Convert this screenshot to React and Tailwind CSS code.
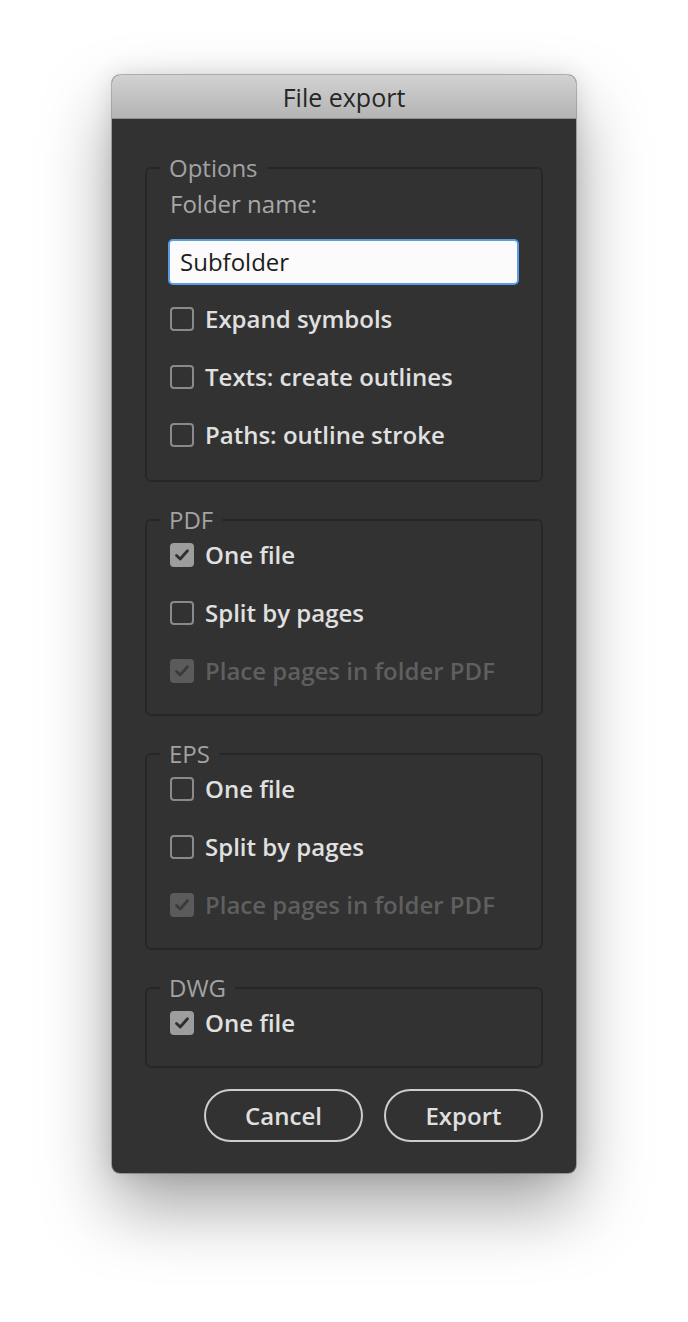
import React from "react";

const font = { fontFamily: '"Open Sans", "Noto Sans", sans-serif' };

function Check({ color }) {
  return (
    <svg width="18" height="18" viewBox="0 0 18 18" fill="none">
      <polyline points="3.5,9.5 7.2,13 14.5,4.8" stroke={color} strokeWidth="2.8" strokeLinecap="round" strokeLinejoin="round" />
    </svg>
  );
}

function Row({ label, checked, disabled }) {
  let box;
  if (checked && disabled) {
    box = (
      <div className="w-[24px] h-[24px] rounded-[4px] bg-[#5b5b5b] flex items-center justify-center shrink-0">
        <Check color="#3b3b3b" />
      </div>
    );
  } else if (checked) {
    box = (
      <div className="w-[24px] h-[24px] rounded-[4px] bg-[#9d9d9d] flex items-center justify-center shrink-0">
        <Check color="#2f2f2f" />
      </div>
    );
  } else {
    box = <div className="w-[24px] h-[24px] rounded-[4px] border-2 border-[#8a8a8a] shrink-0" />;
  }
  return (
    <div className="flex items-center h-[30px] gap-[11px]">
      {box}
      <span className={"text-[24px] leading-[30px] font-semibold whitespace-nowrap " + (disabled ? "text-[#5f5f5f]" : "text-[#e0e0e0]")}>
        {label}
      </span>
    </div>
  );
}

function Group({ title, children }) {
  return (
    <fieldset className="mt-[23px] border-2 border-[#272727] rounded-[6px] pl-[13px] pr-[13px] pb-[28px]">
      <legend className="px-[9px] text-[24px] leading-[30px] text-[#a2a2a2]">{title}</legend>
      <div className="pl-[10px] pt-[5px] flex flex-col gap-[28px]">{children}</div>
    </fieldset>
  );
}

export default function App() {
  return (
    <div className="min-h-[1322px] w-full bg-white flex justify-center pt-[75px]" style={font}>
      <div className="w-[464px] h-[1098px] rounded-[8px] bg-[#323232] flex flex-col overflow-hidden shadow-[0_34px_70px_rgba(0,0,0,0.36),0_0_0_1px_rgba(0,0,0,0.25),0_0_24px_rgba(0,0,0,0.12)]">
        <div className="h-[44px] shrink-0 bg-gradient-to-b from-[#d2d2d2] to-[#b4b4b4] border-b border-[#8f8f8f] flex items-center justify-center">
          <span className="text-[25px] leading-[30px] text-[#262626]">File export</span>
        </div>
        <div className="px-[33px] pt-[34px] flex flex-col">
          <fieldset className="border-2 border-[#272727] rounded-[6px] pl-[13px] pr-[13px] pb-[30px]">
            <legend className="px-[9px] text-[24px] leading-[30px] text-[#a2a2a2]">Options</legend>
            <div className="pl-[10px] pt-[6px] flex flex-col">
              <div className="text-[24px] leading-[30px] text-[#a8a8a8]">Folder name:</div>
              <div className="mt-[20px] -ml-[2px] w-[351px] h-[46px] rounded-[5px] border-2 border-[#5a9be8] bg-[#fbfbfb] flex items-center pl-[10px]">
                <span className="text-[24px] leading-[30px] text-[#1c1c1c]">Subfolder</span>
              </div>
              <div className="mt-[19px] flex flex-col gap-[28px]">
                <Row label="Expand symbols" />
                <Row label="Texts: create outlines" />
                <Row label="Paths: outline stroke" />
              </div>
            </div>
          </fieldset>

          <Group title="PDF">
            <Row label="One file" checked />
            <Row label="Split by pages" />
            <Row label="Place pages in folder PDF" checked disabled />
          </Group>

          <Group title="EPS">
            <Row label="One file" />
            <Row label="Split by pages" />
            <Row label="Place pages in folder PDF" checked disabled />
          </Group>

          <Group title="DWG">
            <Row label="One file" checked />
          </Group>

          <div className="mt-[21px] flex justify-end gap-[21px]">
            <button className="w-[159px] h-[53px] rounded-full border-2 border-[#cdcdcd] text-[24px] leading-[30px] font-semibold text-[#e0e0e0]">
              Cancel
            </button>
            <button className="w-[159px] h-[53px] rounded-full border-2 border-[#cdcdcd] text-[24px] leading-[30px] font-semibold text-[#e0e0e0]">
              Export
            </button>
          </div>
        </div>
      </div>
    </div>
  );
}
